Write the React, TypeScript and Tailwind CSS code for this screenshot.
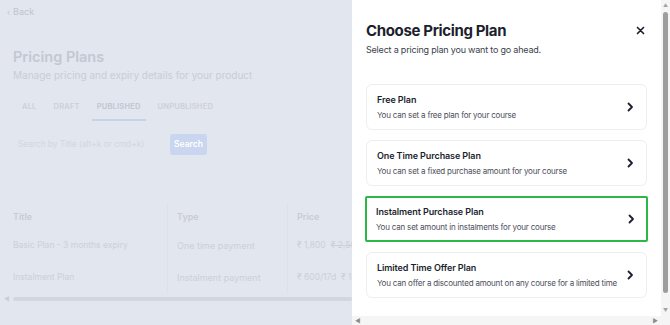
import { type FC } from 'react';

const plans = [
  { title: 'Free Plan', desc: 'You can set a free plan for your course' },
  { title: 'One Time Purchase Plan', desc: 'You can set a fixed purchase amount for your course' },
  { title: 'Instalment Purchase Plan', desc: 'You can set amount in instalments for your course', active: true },
  { title: 'Limited Time Offer Plan', desc: 'You can offer a discounted amount on any course for a limited time' },
];

const Chevron: FC<{ className?: string }> = ({ className }) => (
  <svg className={className} viewBox="0 0 8 10" fill="none" stroke="currentColor" strokeWidth={1.8} strokeLinecap="round" strokeLinejoin="round">
    <path d="M2.5 1.5L6 5L2.5 8.5" />
  </svg>
);

const Background: FC = () => (
  <div className="w-[352px] h-full bg-[#e2e6ef] text-[#c1c6d1] overflow-hidden flex flex-col">
    <div className="pl-[7px] pt-[5px] text-[9px] flex items-center gap-[3px] text-[#bfc4ce]">
      <span className="text-[8px]">‹</span>
      <span>Back</span>
    </div>
    <div className="pl-[13px] mt-[28px]">
      <h1 className="text-[14.5px] font-semibold leading-5 text-[#c3c8d2]">Pricing Plans</h1>
      <p className="text-[10px] mt-px text-[#c9cdd6]">Manage pricing and expiry details for your product</p>
    </div>
    <div className="flex pl-[22px] mt-[18px] text-[7.5px] font-semibold tracking-[0.2px] gap-[17px]">
      <div className="pb-[8px] text-[#ccd0d9]">ALL</div>
      <div className="pb-[8px] text-[#ccd0d9]">DRAFT</div>
      <div className="px-[5px] -mx-[5px] pb-[7px] border-b-2 border-[#c6d2ea] text-[#c0c5cf]">PUBLISHED</div>
      <div className="pb-[8px] text-[#ccd0d9]">UNPUBLISHED</div>
    </div>
    <div className="flex items-center pl-[18px] mt-[13px] gap-[18px]">
      <div className="w-[134px] text-[8.5px] tracking-[-0.1px] text-[#d2d6de] whitespace-nowrap">Search by Title (alt+k or cmd+k)</div>
      <div className="w-[37px] h-[21px] rounded-[3px] bg-[#cad5ef] text-white text-[8.5px] font-semibold flex items-center justify-center">Search</div>
    </div>
    <div className="mt-[48px] text-[8.5px]">
      <div className="grid grid-cols-[163px_120px_80px] h-[27px] items-center pl-[5px]">
        <div className="pl-[8px] font-semibold text-[9px] text-[#c8ccd5] border-r border-[#dde1ea] h-full flex items-center">Title</div>
        <div className="pl-[9px] font-semibold text-[9px] text-[#c8ccd5] border-r border-[#dde1ea] h-full flex items-center">Type</div>
        <div className="pl-[9px] font-semibold text-[9px] text-[#c8ccd5] h-full flex items-center">Price</div>
      </div>
      <div className="grid grid-cols-[163px_120px_80px] h-[32px] items-center pl-[5px] text-[#ccd0d9]">
        <div className="pl-[8px] border-r border-[#dde1ea] h-full flex items-center">Basic Plan - 3 months expiry</div>
        <div className="pl-[9px] border-r border-[#dde1ea] h-full flex items-center text-[9px]">One time payment</div>
        <div className="pl-[9px] h-full flex items-center whitespace-nowrap gap-[5px]">
          <span>₹ 1,800</span>
          <span className="line-through">₹ 2,500</span>
        </div>
      </div>
      <div className="grid grid-cols-[163px_120px_80px] h-[32px] items-center pl-[5px] text-[#ccd0d9]">
        <div className="pl-[8px] border-r border-[#dde1ea] h-full flex items-center">Instalment Plan</div>
        <div className="pl-[9px] border-r border-[#dde1ea] h-full flex items-center text-[9px]">Instalment payment</div>
        <div className="pl-[9px] h-full flex items-center whitespace-nowrap gap-[5px]">
          <span>₹ 600/17d</span>
          <span>₹ 1,800</span>
        </div>
      </div>
      <div className="flex items-center h-[6px] mt-[2px]">
        <span className="w-[13px] text-[6px] text-[#c9cdd6] pl-[4px]">◀</span>
        <div className="flex-1 h-[4px] rounded-full bg-[#d2d6de]"></div>
      </div>
    </div>
  </div>
);

const App: FC = () => {
  return (
    <div className="w-[670px] h-[325px] flex overflow-hidden bg-white" style={{ fontFamily: 'Inter, "Noto Sans", sans-serif' }}>
      <Background />
      <div className="w-[318px] h-full flex flex-col">
        <div className="flex flex-1 min-h-0">
          <div className="flex-1 bg-white pl-[14px] pr-[14px] pt-[21px] overflow-hidden">
            <div className="flex items-start justify-between">
              <div>
                <h2 className="text-[15px] font-bold leading-5 tracking-[-0.35px] text-[#1c1f2e]">Choose Pricing Plan</h2>
                <p className="text-[9px] leading-[14px] mt-[2px] tracking-[-0.2px] text-[#3b3f4c]">Select a pricing plan you want to go ahead.</p>
              </div>
              <svg className="w-[9px] h-[9px] mt-[5px] mr-[2px] text-[#1c1f2e]" viewBox="0 0 12 12" fill="none" stroke="currentColor" strokeWidth={2.2} strokeLinecap="round">
                <path d="M2 2l8 8M10 2l-8 8" />
              </svg>
            </div>
            <div className="mt-[27px] flex flex-col gap-[10px]">
              {plans.map((p) => (
                <div
                  key={p.title}
                  className={
                    p.active
                      ? 'h-[46px] -mx-px rounded-[2px] border-2 border-[#2cb845] pl-[9px] pr-[11px] flex items-center justify-between'
                      : 'h-[46px] rounded-[6px] border border-[#eceef2] pl-[10px] pr-[12px] flex items-center justify-between'
                  }
                >
                  <div>
                    <div className="text-[9px] font-semibold leading-[13px] tracking-[-0.1px] text-[#1c1f2e]">{p.title}</div>
                    <div className="text-[8px] leading-[11px] mt-[4px] tracking-[-0.2px] text-[#4a4e5a]">{p.desc}</div>
                  </div>
                  <Chevron className="w-[8px] h-[10px] text-[#1c1f2e]" />
                </div>
              ))}
            </div>
          </div>
          <div className="w-[9px] bg-[#f5f5f5] flex flex-col items-center">
            <span className="text-[5px] leading-none mt-[3px] text-[#a3a3a3]">▲</span>
            <div className="w-[5px] h-[281px] mt-[4px] rounded-full bg-[#9d9d9d]"></div>
            <div className="flex-1"></div>
            <span className="text-[5px] leading-none mb-[3px] text-[#a3a3a3]">▼</span>
          </div>
        </div>
        <div className="h-[9px] bg-[#f5f5f5] flex items-center justify-between pl-[3px] pr-[12px]">
          <span className="text-[6px] leading-none text-[#8d8d8d]">◀</span>
          <span className="text-[6px] leading-none text-[#8d8d8d]">▶</span>
        </div>
      </div>
    </div>
  );
};

export default App;
